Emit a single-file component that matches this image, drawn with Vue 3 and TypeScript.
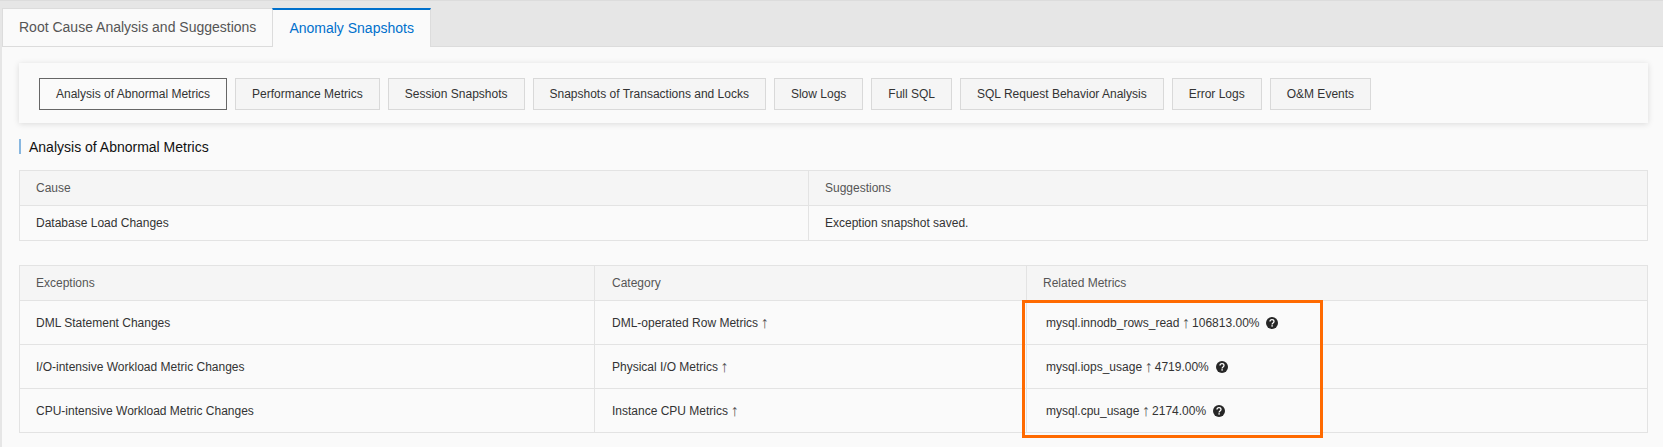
<script setup lang="ts">
const buttons: string[] = ['Analysis of Abnormal Metrics','Performance Metrics','Session Snapshots','Snapshots of Transactions and Locks','Slow Logs','Full SQL','SQL Request Behavior Analysis','Error Logs','O&M Events']
const rows = [
  { e: 'DML Statement Changes', c: 'DML-operated Row Metrics', m: 'mysql.innodb_rows_read', v: '106813.00%' },
  { e: 'I/O-intensive Workload Metric Changes', c: 'Physical I/O Metrics', m: 'mysql.iops_usage', v: '4719.00%' },
  { e: 'CPU-intensive Workload Metric Changes', c: 'Instance CPU Metrics', m: 'mysql.cpu_usage', v: '2174.00%' },
]
</script>

<template>
  <div class="page">
    <div class="tabs">
      <div class="tab">Root Cause Analysis and Suggestions</div>
      <div class="tab active">Anomaly Snapshots</div>
    </div>
    <div class="content">
      <div class="toolbar">
        <button v-for="(b, i) in buttons" :key="b" class="btn" :class="{ on: i === 0 }">{{ b }}</button>
      </div>
      <h3 class="title">Analysis of Abnormal Metrics</h3>
      <table class="tbl first">
        <colgroup><col style="width:789px" /><col /></colgroup>
        <thead><tr><th>Cause</th><th>Suggestions</th></tr></thead>
        <tbody><tr class="short"><td>Database Load Changes</td><td>Exception snapshot saved.</td></tr></tbody>
      </table>
      <div class="wrap">
        <table class="tbl">
          <colgroup><col style="width:575px" /><col style="width:432px" /><col /></colgroup>
          <thead><tr><th>Exceptions</th><th class="cat">Category</th><th>Related Metrics</th></tr></thead>
          <tbody>
            <tr v-for="r in rows" :key="r.e">
              <td>{{ r.e }}</td>
              <td class="cat">{{ r.c }} <span class="arrow">↑</span></td>
              <td class="metric">
                <span>{{ r.m }} <span class="arrow">↑</span> {{ r.v }}</span>
                <svg class="help" width="12" height="12" viewBox="0 0 12 12">
                  <circle cx="6" cy="6" r="6" fill="#262626" />
                  <path d="M4 4.6C4 3.4 4.9 2.7 6 2.7s2 .7 2 1.8c0 1.5-1.9 1.5-1.9 2.9" fill="none" stroke="#fff" stroke-width="1.3" />
                  <rect x="5.4" y="8.2" width="1.4" height="1.4" fill="#fff" />
                </svg>
              </td>
            </tr>
          </tbody>
        </table>
        <div class="highlight"></div>
      </div>
    </div>
  </div>
</template>

<style>
html, body { margin: 0; background: #fafafa; }
</style>

<style scoped>
.page {
  width: 1663px; height: 447px; overflow: hidden; box-sizing: border-box;
  background: #e6e6e6; border-top: 1px solid #dcdcdc; padding: 7px 0 0 2px;
  font-family: "Liberation Sans", Arial, sans-serif; color: #333;
}
.tabs { display: flex; height: 38px; border-bottom: 1px solid #dcdcdc; box-sizing: content-box; }
.tab {
  box-sizing: border-box; height: 38px; padding: 0 16px; line-height: 37px; font-size: 14px; white-space: nowrap;
  color: #555; background: #fafafa; border: 1px solid #dcdcdc; border-bottom: 0; border-right: 0;
}
.tab.active {
  height: 39px; margin-bottom: -1px; color: #0070cc; border-top: 2px solid #0070cc;
  border-left: 1px solid #dcdcdc; border-right: 1px solid #dcdcdc;
}
.content { height: 401px; background: #fafafa; padding: 16px 15px 0 17px; box-sizing: border-box; }
.toolbar {
  height: 60px; box-sizing: border-box; display: flex; align-items: center; gap: 8px; padding: 1px 18px 0 20px;
  background: #fafafa; box-shadow: 0 1px 6px rgba(0,0,0,.13);
}
.btn {
  height: 32px; padding: 0 16px; font: 12px "Liberation Sans", Arial, sans-serif; color: #333;
  background: #f5f5f5; border: 1px solid #d9d9d9; white-space: nowrap; margin: 0;
}
.btn.on { background: #fafafa; border-color: #666; }
.title {
  margin: 16px 0; font-weight: 400; font-size: 14px; line-height: 16px; color: #111;
  border-left: 2px solid #88b7e0; padding-left: 8px; height: 15px;
}
.tbl {
  width: 100%; border-collapse: collapse; table-layout: fixed; font-size: 12px; background: #fafafa;
  border: 1px solid #e3e3e3; margin: 0;
}
.first { margin-bottom: 24px; }
th, td { border: 1px solid #e3e3e3; padding: 0 16px; text-align: left; font-weight: 400; color: #333; }
th { height: 35px; background: #f5f5f5; color: #555; box-sizing: border-box; }
td { height: 44px; box-sizing: border-box; }
tr.short td { height: 35px; }
.cat { padding-left: 17px; }
.metric { padding-left: 19px; }
.arrow {
  display: inline-block; width: 6px; margin: 0 1px 0 -1px; text-align: center; font-size: 16px; line-height: 10px; color: #555;
  vertical-align: -1px;
}
.help { margin-left: 7px; vertical-align: -2px; }
.wrap { position: relative; }
.highlight {
  position: absolute; left: 1003px; top: 35px; width: 301px; height: 138px; box-sizing: border-box;
  border: 3px solid #ff6a00; pointer-events: none;
}
</style>
